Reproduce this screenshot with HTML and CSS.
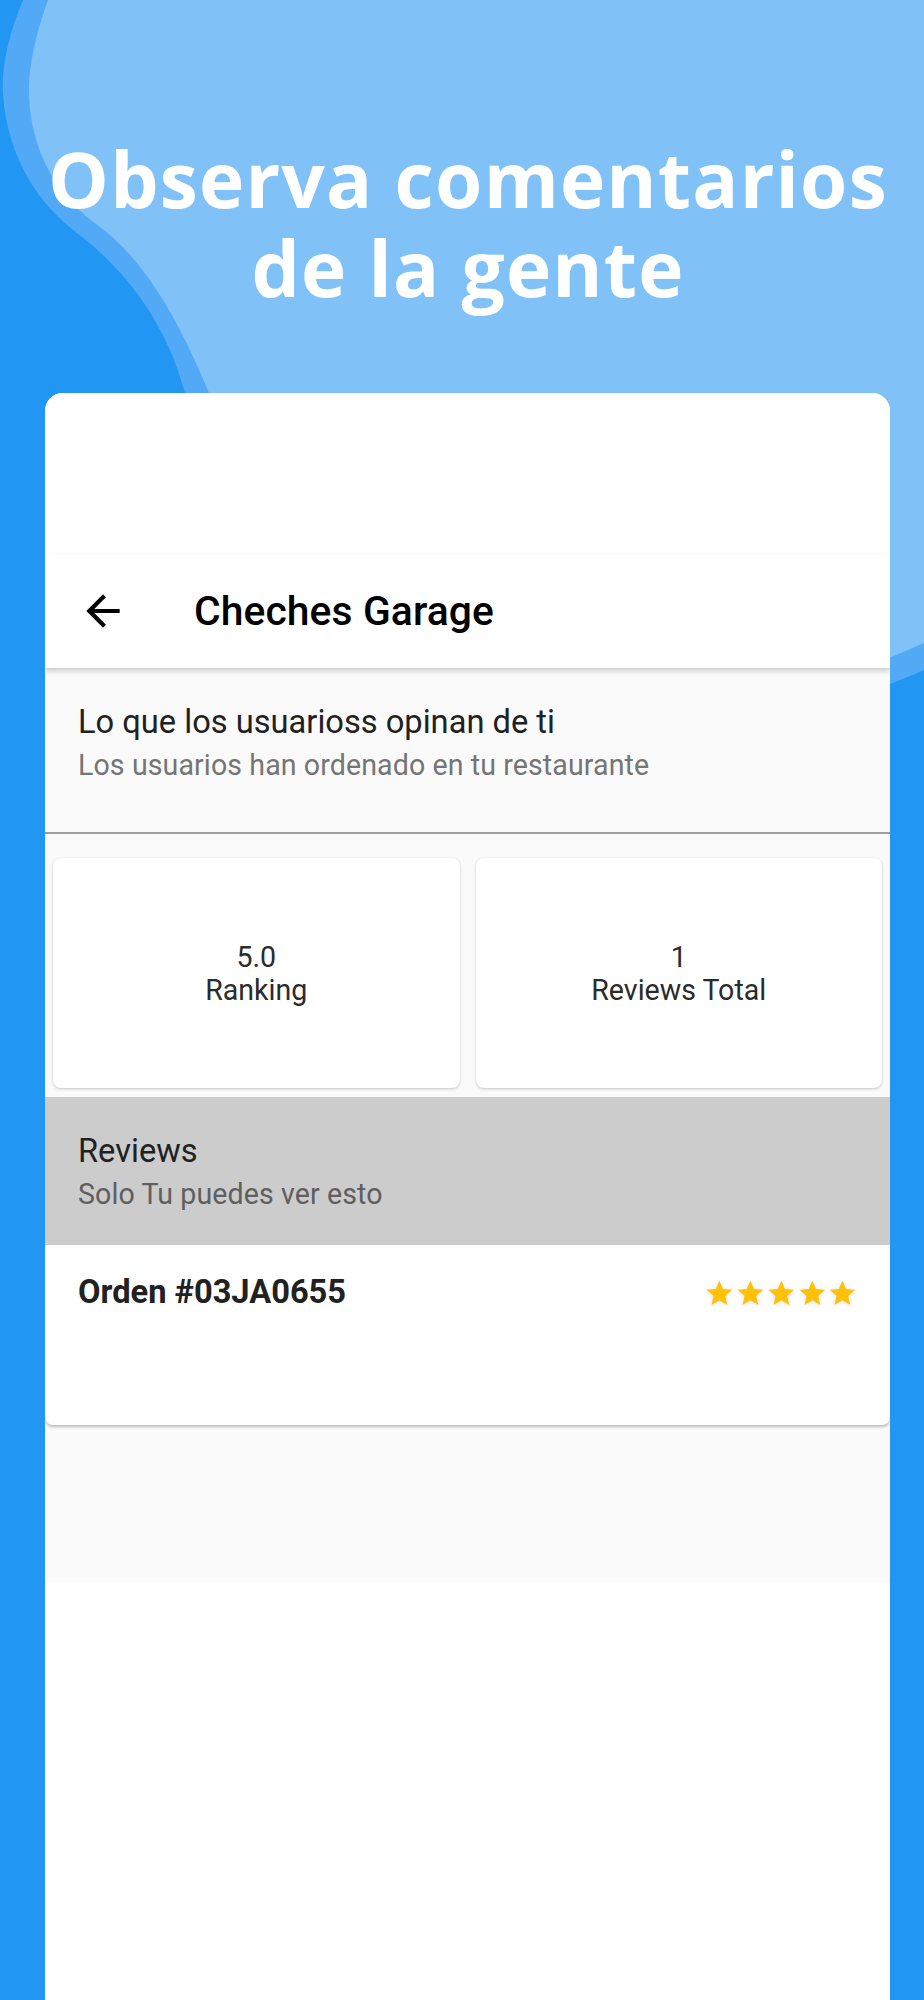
FILE: index.html
```html
<!DOCTYPE html>
<html lang="es">
<head>
<meta charset="utf-8">
<title>Observa comentarios de la gente</title>
<link rel="stylesheet" href="styles.css">
</head>
<body>
<div class="page">
  <svg class="bg" width="924" height="820" viewBox="0 0 924 820" aria-hidden="true">
    <path class="bg-mid" d="M23,0 C8,35 1,70 3,95 C8,160 40,205 77,233 C125,270 165,320 185,393 L290,800 C600,790 820,715 924,670 L924,0 Z"/>
    <path class="bg-light" d="M48,0 C35,35 28,70 29,95 C31,150 55,195 100,227 C140,257 175,310 209,393 L320,760 C600,760 820,690 924,643 L924,0 Z"/>
  </svg>

  <header class="hero">
    <h1 class="hero-title"><span class="hero-line">Observa comentarios</span><span class="hero-line">de la gente</span></h1>
  </header>

  <main class="card">
    <div class="status-area"></div>
    <div class="appbar">
      <span class="appbar-back">
        <svg viewBox="0 0 24 24" width="50" height="50"><path d="M20 11H7.83l5.59-5.59L12 4l-8 8 8 8 1.41-1.41L7.83 13H20v-2z"/></svg>
      </span>
      <span class="appbar-title">Cheches Garage</span>
    </div>
    <div class="screen">
      <section class="tile">
        <div class="tile-title">Lo que los usuarioss opinan de ti</div>
        <div class="tile-sub">Los usuarios han ordenado en tu restaurante</div>
      </section>
      <hr class="divider">
      <section class="stats">
        <div class="stat-card">
          <span>5.0</span>
          <span>Ranking</span>
        </div>
        <div class="stat-card">
          <span>1</span>
          <span>Reviews Total</span>
        </div>
      </section>
      <section class="tile tile-grey">
        <div class="tile-title">Reviews</div>
        <div class="tile-sub">Solo Tu puedes ver esto</div>
      </section>
      <article class="review">
        <div class="review-id">Orden #03JA0655</div>
        <div class="stars">
          <svg viewBox="0 0 24 24"><path d="M12 17.27L18.18 21l-1.64-7.03L22 9.24l-7.19-.61L12 2 9.19 8.63 2 9.24l5.46 4.73L5.82 21z"/></svg>
          <svg viewBox="0 0 24 24"><path d="M12 17.27L18.18 21l-1.64-7.03L22 9.24l-7.19-.61L12 2 9.19 8.63 2 9.24l5.46 4.73L5.82 21z"/></svg>
          <svg viewBox="0 0 24 24"><path d="M12 17.27L18.18 21l-1.64-7.03L22 9.24l-7.19-.61L12 2 9.19 8.63 2 9.24l5.46 4.73L5.82 21z"/></svg>
          <svg viewBox="0 0 24 24"><path d="M12 17.27L18.18 21l-1.64-7.03L22 9.24l-7.19-.61L12 2 9.19 8.63 2 9.24l5.46 4.73L5.82 21z"/></svg>
          <svg viewBox="0 0 24 24"><path d="M12 17.27L18.18 21l-1.64-7.03L22 9.24l-7.19-.61L12 2 9.19 8.63 2 9.24l5.46 4.73L5.82 21z"/></svg>
        </div>
      </article>
      <div class="screen-rest"></div>
    </div>
  </main>
</div>
</body>
</html>
```
FILE: styles.css
```css
* { box-sizing: border-box; }

html, body {
  margin: 0;
  padding: 0;
}

body {
  background: #2196F3;
  font-family: Roboto, "Liberation Sans", sans-serif;
}

.page {
  position: relative;
  width: 924px;
  height: 2000px;
  overflow: hidden;
  background: #2196F3;
}

.bg {
  position: absolute;
  left: 0;
  top: 0;
}

.bg-mid { fill: #52A9F5; }
.bg-light { fill: #80C1F7; }

.hero {
  position: relative;
  height: 393px;
  padding-top: 140px;
}

.hero-title {
  margin: 0;
  padding-left: 12px;
  color: #ffffff;
  font-family: "Open Sans", "DejaVu Sans", sans-serif;
  font-weight: 700;
  font-size: 76.5px;
  line-height: 76px;
  letter-spacing: 1.2px;
  text-align: center;
}

.hero-line {
  display: block;
}

.hero-line + .hero-line {
  margin-top: 13.4px;
}

.card {
  position: relative;
  margin: 0 34px 0 45px;
  height: 1607px;
  background: #ffffff;
  border-radius: 18px 18px 0 0;
  overflow: hidden;
}

.status-area {
  height: 161px;
  background: #ffffff;
}

.appbar {
  position: relative;
  z-index: 2;
  height: 114px;
  display: flex;
  align-items: center;
  padding-left: 33px;
  background: #ffffff;
  box-shadow: 0 3px 5px rgba(0, 0, 0, 0.18);
}

.appbar-back {
  display: flex;
  width: 50px;
  height: 50px;
}

.appbar-back svg { fill: #000000; }

.appbar-title {
  margin-left: 66px;
  font-size: 40.8px;
  font-weight: 500;
  color: #000000;
  letter-spacing: 0.1px;
}

.screen {
  background: #FAFAFA;
}

.tile {
  height: 164px;
  padding: 33px 33px 0;
  background: #FAFAFA;
}

.tile-title {
  font-size: 32.65px;
  line-height: 42px;
  color: #212121;
}

.tile-sub {
  margin-top: 1px;
  font-size: 28.57px;
  line-height: 42px;
  color: #757575;
  letter-spacing: 0.1px;
}

.divider {
  margin: 0;
  height: 2px;
  border: 0;
  background: #9E9E9E;
}

.stats {
  display: grid;
  grid-template-columns: 1fr 1fr;
  gap: 16px;
  padding: 24px 8px 9px;
}

.stat-card {
  height: 230px;
  display: flex;
  flex-direction: column;
  align-items: center;
  justify-content: center;
  padding-top: 2px;
  background: #ffffff;
  border-radius: 8px;
  box-shadow: 0 1px 3px rgba(0, 0, 0, 0.22);
  font-size: 28.57px;
  line-height: 33px;
  color: #2b2b2b;
}

.tile-grey {
  height: 148px;
  background: #CCCCCC;
}

.tile-grey .tile-sub { color: #5F5F5F; }

.review {
  position: relative;
  z-index: 1;
  height: 180px;
  display: flex;
  justify-content: space-between;
  align-items: flex-start;
  padding: 27px 32px 0 33px;
  background: #ffffff;
  border-radius: 0 0 8px 8px;
  box-shadow: 0 2px 3px rgba(0, 0, 0, 0.25);
}

.review-id {
  font-size: 32.65px;
  font-weight: 700;
  line-height: 40px;
  color: #212121;
}

.stars {
  display: flex;
  margin-top: 6px;
  filter: drop-shadow(0 1px 2px rgba(0, 0, 0, 0.12));
}

.stars svg {
  width: 30.75px;
  height: 30.75px;
  fill: #FFC107;
}

.screen-rest {
  height: 157px;
  background: #FAFAFA;
}
```
